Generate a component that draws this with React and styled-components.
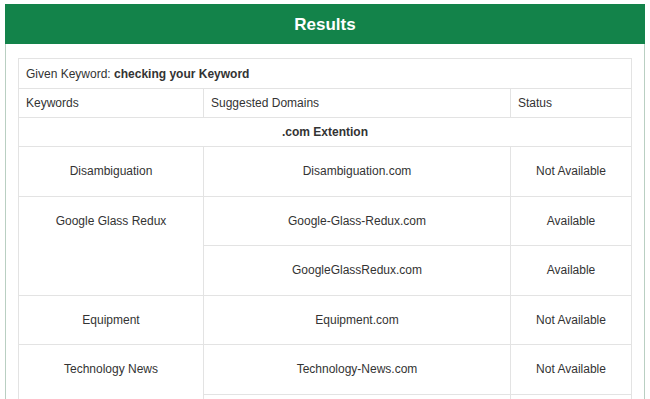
import React from "react";
import styled, { createGlobalStyle } from "styled-components";

const GlobalStyle = createGlobalStyle`
  body {
    margin: 0;
    background: #fff;
    font-family: "Liberation Sans", Arial, sans-serif;
    color: #333;
  }
`;

const Page = styled.div`
  padding: 4px 5px 0 5px;
`;

const Panel = styled.div`
  border: 1px solid #b9cfc2;
  border-top: none;
  background: #fff;
`;

const PanelHeading = styled.div`
  background: #13834a;
  color: #fff;
  height: 40px;
  display: flex;
  align-items: center;
  justify-content: center;
  padding-top: 2px;
  box-sizing: border-box;
  margin: 0 -1px;
`;

const PanelTitle = styled.h3`
  margin: 0;
  font-size: 17px;
  font-weight: bold;
`;

const PanelBody = styled.div`
  padding: 14px 12px 0 12px;
`;

const Table = styled.table`
  width: 100%;
  table-layout: fixed;
  border-collapse: collapse;
  font-size: 12px;
  line-height: 16px;
  color: #333;
`;

const Col = styled.col`
  width: ${(p) => p.$w};
`;

const Cell = styled.td`
  border: 1px solid #e3e3e3;
  padding: ${(p) => (p.$tall ? "16px 7px 16.5px" : p.$first ? "7px 7px 6px" : "6px 7px")};
  text-align: ${(p) => (p.$center ? "center" : "left")};
  vertical-align: top;
  font-weight: ${(p) => (p.$bold ? "bold" : "normal")};
`;

const rows = [
  { keyword: "Disambiguation", domains: [["Disambiguation.com", "Not Available"]] },
  {
    keyword: "Google Glass Redux",
    domains: [
      ["Google-Glass-Redux.com", "Available"],
      ["GoogleGlassRedux.com", "Available"],
    ],
  },
  { keyword: "Equipment", domains: [["Equipment.com", "Not Available"]] },
  {
    keyword: "Technology News",
    domains: [
      ["Technology-News.com", "Not Available"],
      ["TechnologyNews.com", "Not Available"],
    ],
  },
];

export default function App() {
  return (
    <Page>
      <GlobalStyle />
      <Panel>
        <PanelHeading>
          <PanelTitle>Results</PanelTitle>
        </PanelHeading>
        <PanelBody>
          <Table>
            <colgroup>
              <Col $w="185px" />
              <Col $w="307px" />
              <Col $w="auto" />
            </colgroup>
            <tbody>
              <tr>
                <Cell colSpan={3} $first>
                  Given Keyword: <b>checking your Keyword</b>
                </Cell>
              </tr>
              <tr>
                <Cell>Keywords</Cell>
                <Cell>Suggested Domains</Cell>
                <Cell>Status</Cell>
              </tr>
              <tr>
                <Cell colSpan={3} $center $bold>
                  .com Extention
                </Cell>
              </tr>
              {rows.map((row) =>
                row.domains.map(([domain, status], i) => (
                  <tr key={domain}>
                    {i === 0 && (
                      <Cell $tall $center rowSpan={row.domains.length}>
                        {row.keyword}
                      </Cell>
                    )}
                    <Cell $tall $center>
                      {domain}
                    </Cell>
                    <Cell $tall $center>
                      {status}
                    </Cell>
                  </tr>
                ))
              )}
            </tbody>
          </Table>
        </PanelBody>
      </Panel>
    </Page>
  );
}
